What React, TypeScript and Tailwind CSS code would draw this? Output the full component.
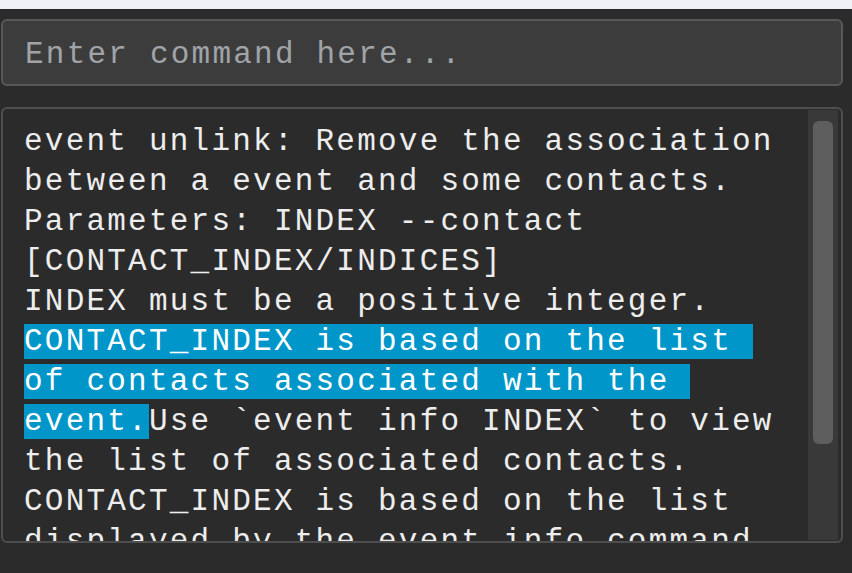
import React from "react";

// One line of the help text, possibly with a selected (highlighted) part
interface Line {
  sel?: string;
  text?: string;
}

const lines: Line[] = [
  { text: "event unlink: Remove the association" },
  { text: "between a event and some contacts." },
  { text: "Parameters: INDEX --contact" },
  { text: "[CONTACT_INDEX/INDICES]" },
  { text: "INDEX must be a positive integer." },
  { sel: "CONTACT_INDEX is based on the list " },
  { sel: "of contacts associated with the " },
  { sel: "event.", text: "Use `event info INDEX` to view" },
  { text: "the list of associated contacts." },
  { text: "CONTACT_INDEX is based on the list" },
  { text: "displayed by the event info command" },
];

const mono = "font-['Liberation_Mono','Courier_New',monospace] text-[31px] tracking-[2.22px]";

const App: React.FC = () => {
  return (
    <div className="h-[573px] w-[852px] overflow-hidden bg-[#2b2b2b] flex flex-col">
      {/* Window strip */}
      <div className="h-[9px] bg-[#eef0f5]" />

      {/* Command box */}
      <div className="mt-[10px] ml-px w-[842px] h-[67px] border-2 border-[#585858] rounded-[6px] bg-[#3c3c3c] flex items-center">
        <input
          className={`${mono} w-full bg-transparent pl-[22px] pt-[5px] text-[#e8e8e8] placeholder:text-[#a0a4a8] outline-none`}
          placeholder="Enter command here..."
        />
      </div>

      {/* Result display */}
      <div className="mt-[21px] ml-px w-[842px] h-[436px] border-2 border-[#4e4e4e] rounded-[6px] bg-[#2b2b2b] flex overflow-hidden">
        <div className={`${mono} flex-1 pl-[21px] pt-[13px] overflow-hidden leading-[40px] text-[#ededed]`}>
          {lines.map((l, i) => (
            <div key={i} className="whitespace-pre h-[40px]">
              {l.sel && <span className="bg-[#0096c9] text-white">{l.sel}</span>}
              {l.text}
            </div>
          ))}
        </div>

        {/* Scrollbar */}
        <div className="w-[30px] mr-[3px] my-px bg-[#393939] flex justify-center">
          <div className="mt-[11px] w-[20px] h-[323px] rounded-[6px] bg-[#5e5e5e]" />
        </div>
      </div>
    </div>
  );
};

export default App;
